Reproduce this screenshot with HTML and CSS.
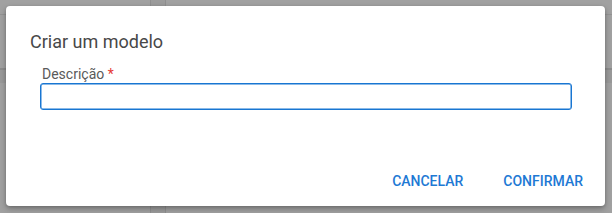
FILE: index.html
```html
<!DOCTYPE html>
<html lang="pt-BR">
<head>
    <meta charset="UTF-8">
    <meta name="viewport" content="width=device-width, initial-scale=1.0">
    <title>Criar um modelo</title>
    <link rel="stylesheet" href="styles.css">
</head>
<body>
    <div class="backdrop">
        <div class="dialog" role="dialog" aria-labelledby="dialogTitulo">
            <h2 id="dialogTitulo" class="dialog-titulo">Criar um modelo</h2>
            <div class="dialog-conteudo">
                <label for="descricao" class="campo-label">Descrição <span class="obrigatorio">*</span></label>
                <input type="text" id="descricao" name="descricao" class="campo-input" required>
            </div>
            <div class="dialog-acoes">
                <button class="botao">Cancelar</button>
                <button class="botao">Confirmar</button>
            </div>
        </div>
    </div>
</body>
</html>
```

FILE: styles.css
```css
html, body {
    margin: 0;
    padding: 0;
    height: 100%;
}
body {
    font-family: Roboto, 'Liberation Sans', Arial, sans-serif;
    background-color: #a1a1a1;
    /* página por trás do modal, escurecida */
    background-image:
        linear-gradient(to right, transparent 150px, #8f8f8f 150px, #8f8f8f 151px, #9b9b9b 151px, #9b9b9b 165px, #8f8f8f 165px, #8f8f8f 166px, transparent 166px),
        linear-gradient(to bottom, transparent 68px, #8c8c8c 68px, #8c8c8c 70px, #999 70px, #999 83px, transparent 83px),
        linear-gradient(to bottom, transparent 14px, #939393 14px, #939393 15px, transparent 15px);
    overflow: hidden;
}
.backdrop {
    padding: 6px 7px 7px 6px;
    box-sizing: border-box;
    height: 100%;
}
.dialog {
    width: 599px;
    height: 200px;
    background-color: #fff;
    border-radius: 4px;
    box-shadow: 0 3px 6px rgba(0,0,0,0.25), 0 1px 3px rgba(0,0,0,0.15);
    display: flex;
    flex-direction: column;
    box-sizing: border-box;
}
.dialog-titulo {
    margin: 0;
    padding: 24px 24px 0 24px;
    font-size: 18px;
    line-height: 24px;
    font-weight: 400;
    color: #484848;
}
.dialog-conteudo {
    padding: 12px 33px 0 34px;
    display: flex;
    flex-direction: column;
}
.campo-label {
    font-size: 14px;
    line-height: 16px;
    color: #5a5a5a;
    margin-left: 2px;
    margin-bottom: 1px;
}
.obrigatorio {
    color: #e53935;
}
.campo-input {
    height: 27px;
    width: 100%;
    box-sizing: border-box;
    border: 1px solid #1976d2;
    box-shadow: inset 0 0 0 0.5px #1976d2;
    border-radius: 3px;
    padding: 0 8px;
    font-family: inherit;
    font-size: 14px;
    outline: none;
}
.dialog-acoes {
    margin-top: auto;
    display: flex;
    justify-content: flex-end;
    gap: 24px;
    padding: 0 14px 10px 0;
}
.botao {
    background: none;
    border: none;
    padding: 6px 8px;
    font-family: inherit;
    font-size: 14px;
    line-height: 18px;
    font-weight: 500;
    text-transform: uppercase;
    color: #1e79d4;
    cursor: pointer;
    border-radius: 4px;
}
.botao:hover {
    background-color: rgba(25,118,210,0.06);
}
```
